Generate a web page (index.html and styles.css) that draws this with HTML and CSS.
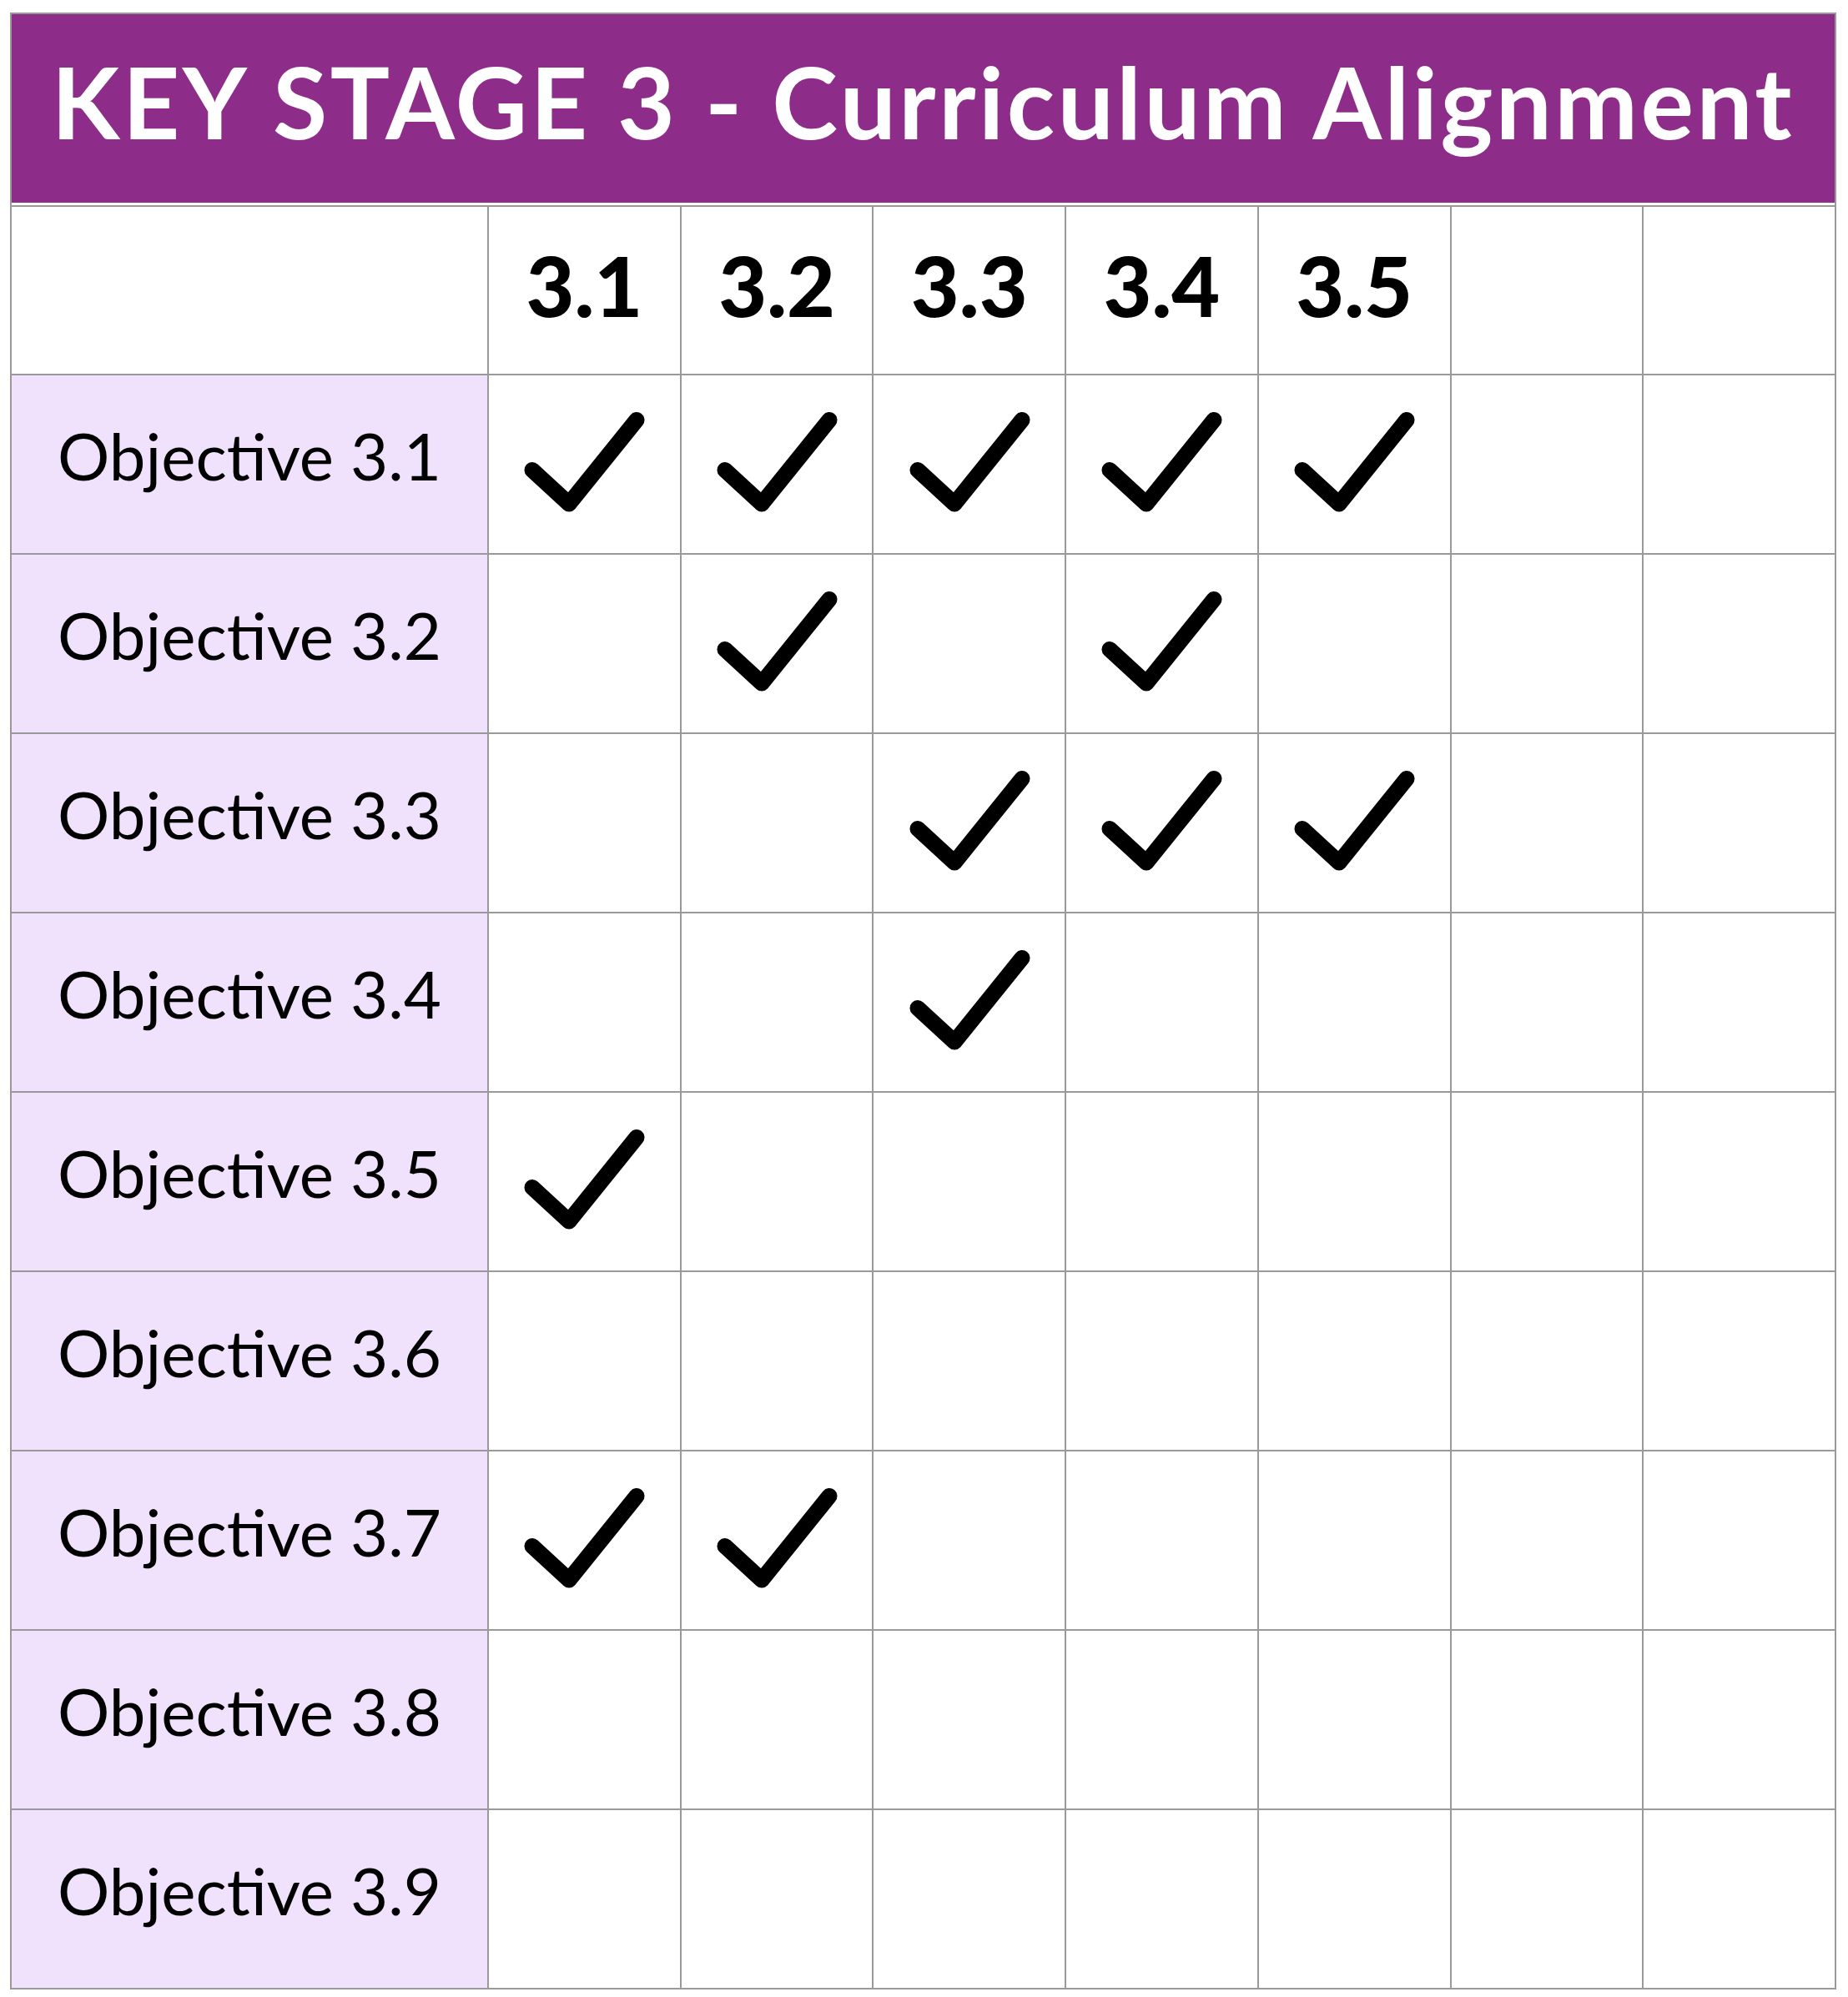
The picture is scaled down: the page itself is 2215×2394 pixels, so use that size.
FILE: index.html
```html
<!DOCTYPE html>
<html lang="en">
<head>
<meta charset="utf-8">
<title>KEY STAGE 3 - Curriculum Alignment</title>
<link rel="stylesheet" href="styles.css">
</head>
<body>
<svg class="defs" width="0" height="0" aria-hidden="true">
  <symbol id="check" viewBox="0 0 160 130">
    <polyline points="18,71.5 62,112 143,11.5" fill="none" stroke="#000" stroke-width="19" stroke-linecap="round" stroke-linejoin="round"/>
  </symbol>
</svg>
<main class="page">
  <table class="grid">
    <colgroup>
      <col class="col-label">
      <col class="col-obj"><col class="col-obj"><col class="col-obj"><col class="col-obj"><col class="col-obj"><col class="col-obj"><col class="col-obj">
    </colgroup>
    <thead>
      <tr class="title-row"><th class="title" colspan="8">KEY STAGE 3 - Curriculum Alignment</th></tr>
      <tr class="head-row">
        <th class="corner"></th>
        <th>3.1</th><th>3.2</th><th>3.3</th><th>3.4</th><th>3.5</th><th></th><th></th>
      </tr>
    </thead>
    <tbody>
      <tr>
        <th class="label">Objective 3.1</th>
        <td><svg class="tick"><use href="#check"/></svg></td>
        <td><svg class="tick"><use href="#check"/></svg></td>
        <td><svg class="tick"><use href="#check"/></svg></td>
        <td><svg class="tick"><use href="#check"/></svg></td>
        <td><svg class="tick"><use href="#check"/></svg></td>
        <td></td><td></td>
      </tr>
      <tr>
        <th class="label">Objective 3.2</th>
        <td></td>
        <td><svg class="tick"><use href="#check"/></svg></td>
        <td></td>
        <td><svg class="tick"><use href="#check"/></svg></td>
        <td></td><td></td><td></td>
      </tr>
      <tr>
        <th class="label">Objective 3.3</th>
        <td></td><td></td>
        <td><svg class="tick"><use href="#check"/></svg></td>
        <td><svg class="tick"><use href="#check"/></svg></td>
        <td><svg class="tick"><use href="#check"/></svg></td>
        <td></td><td></td>
      </tr>
      <tr>
        <th class="label">Objective 3.4</th>
        <td></td><td></td>
        <td><svg class="tick"><use href="#check"/></svg></td>
        <td></td><td></td><td></td><td></td>
      </tr>
      <tr>
        <th class="label">Objective 3.5</th>
        <td><svg class="tick"><use href="#check"/></svg></td>
        <td></td><td></td><td></td><td></td><td></td><td></td>
      </tr>
      <tr>
        <th class="label">Objective 3.6</th>
        <td></td><td></td><td></td><td></td><td></td><td></td><td></td>
      </tr>
      <tr>
        <th class="label">Objective 3.7</th>
        <td><svg class="tick"><use href="#check"/></svg></td>
        <td><svg class="tick"><use href="#check"/></svg></td>
        <td></td><td></td><td></td><td></td><td></td>
      </tr>
      <tr>
        <th class="label">Objective 3.8</th>
        <td></td><td></td><td></td><td></td><td></td><td></td><td></td>
      </tr>
      <tr>
        <th class="label">Objective 3.9</th>
        <td></td><td></td><td></td><td></td><td></td><td></td><td></td>
      </tr>
    </tbody>
  </table>
</main>
</body>
</html>
```

FILE: styles.css
```css
html, body {
  margin: 0;
  padding: 0;
  background: #ffffff;
}

.defs {
  position: absolute;
  width: 0;
  height: 0;
  overflow: hidden;
}

.page {
  padding: 15px 0 0 12px;
}

.grid {
  border-collapse: collapse;
  table-layout: fixed;
  width: 2189px;
  font-family: "Lato", "Noto Sans", sans-serif;
  color: #000000;
}

.grid th,
.grid td {
  border: 2px solid #999999;
  padding: 0;
  text-align: center;
  vertical-align: middle;
}

.col-label {
  width: 572px;
}

.title-row {
  height: 231px;
}

.grid .title {
  background: #8e2c8a;
  color: #ffffff;
  font-weight: 700;
  font-size: 119px;
  letter-spacing: 3.5px;
  line-height: 1;
  white-space: nowrap;
  padding-bottom: 20px;
  box-shadow: inset 0 -3px 0 #ffffff;
}

.head-row {
  height: 202px;
}

.grid .head-row th {
  font-weight: 900;
  font-size: 100px;
  line-height: 1;
  padding-bottom: 15px;
}

.grid tbody tr {
  height: 215px;
}

.grid .label {
  background: #f0e2fc;
  font-weight: 400;
  font-size: 78px;
  line-height: 1;
  white-space: nowrap;
  padding-bottom: 22px;
}

.tick {
  display: block;
  width: 160px;
  height: 130px;
  margin: 0 auto;
}
```
